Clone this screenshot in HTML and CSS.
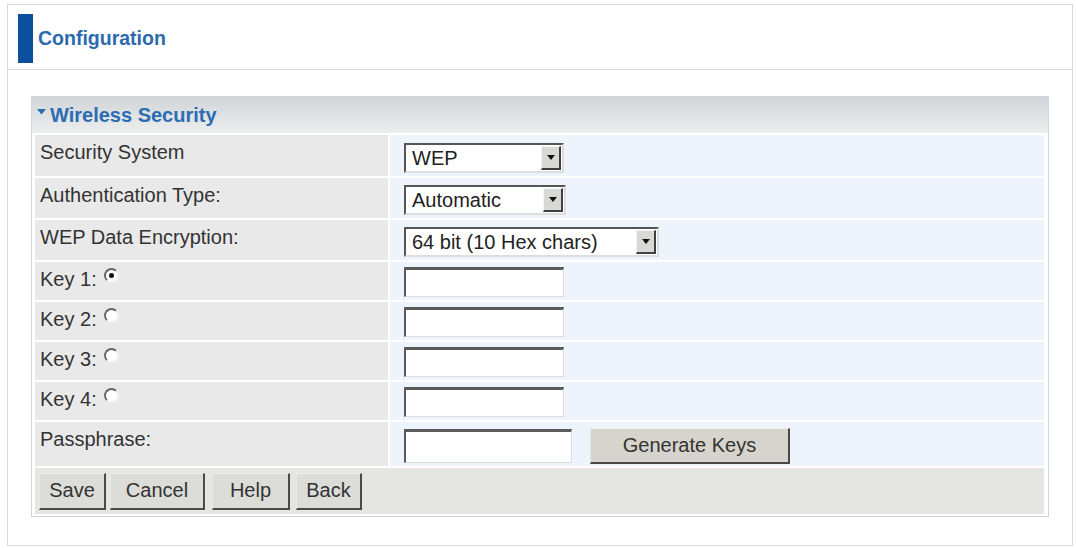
FILE: index.html
```html
<!DOCTYPE html>
<html lang="en">
<head>
    <meta charset="UTF-8">
    <title>Configuration - Wireless Security</title>
    <link rel="stylesheet" href="styles.css">
</head>
<body>

<div class="frame">
    <div class="page-head">
        <span class="head-mark"></span>
        <h1 class="page-title">Configuration</h1>
    </div>

    <div class="page-body">
        <div class="panel">
            <div class="panel-title">
                <svg class="caret" width="9" height="6" viewBox="0 0 9 6"><path d="M0 0 H9 L4.5 5.5 Z" fill="#2b6cb3"/></svg>
                Wireless Security
            </div>

            <div class="form-grid">
                <div class="label">Security System</div>
                <div class="value">
                    <span class="select-box sel-wep">
                        <select><option>WEP</option></select>
                        <span class="select-arrow"></span>
                    </span>
                </div>

                <div class="label">Authentication Type:</div>
                <div class="value">
                    <span class="select-box sel-auth">
                        <select><option>Automatic</option></select>
                        <span class="select-arrow"></span>
                    </span>
                </div>

                <div class="label">WEP Data Encryption:</div>
                <div class="value">
                    <span class="select-box sel-enc">
                        <select><option>64 bit (10 Hex chars)</option></select>
                        <span class="select-arrow"></span>
                    </span>
                </div>

                <div class="label">Key 1: <input type="radio" name="key" class="radio" checked></div>
                <div class="value"><input type="text" class="text-input"></div>

                <div class="label">Key 2: <input type="radio" name="key" class="radio"></div>
                <div class="value"><input type="text" class="text-input"></div>

                <div class="label">Key 3: <input type="radio" name="key" class="radio"></div>
                <div class="value"><input type="text" class="text-input"></div>

                <div class="label">Key 4: <input type="radio" name="key" class="radio"></div>
                <div class="value"><input type="text" class="text-input"></div>

                <div class="label">Passphrase:</div>
                <div class="value">
                    <input type="text" class="text-input pass-input">
                    <button class="btn btn-generate">Generate Keys</button>
                </div>
            </div>

            <div class="actions">
                <button class="btn btn-save">Save</button>
                <button class="btn btn-cancel">Cancel</button>
                <button class="btn btn-help">Help</button>
                <button class="btn btn-back">Back</button>
            </div>
        </div>
    </div>
</div>

</body>
</html>
```

FILE: styles.css
```css
body {
    margin: 0;
    padding: 0;
    background-color: #fff;
    font-family: "Liberation Sans", Arial, sans-serif;
    color: #333;
}

.frame {
    margin: 4px 0 0 7px;
    width: 1064px;
    height: 540px;
    border: 1px solid #d9d9d9;
}

/* top heading with the blue marker */
.page-head {
    display: flex;
    align-items: center;
    gap: 5px;
    padding: 9px 0 6px 10px;
    border-bottom: 1px solid #d8d8d8;
}

.head-mark {
    width: 15px;
    height: 49px;
    background-color: #0c4f9f;
}

.page-title {
    margin: 0;
    font-size: 19.5px;
    font-weight: bold;
    color: #2d69ae;
}

.page-body {
    padding: 26px 23px 0 23px;
}

.panel {
    border: 1px solid #cdd5dd;
    padding: 0 4px 2px 3px;
}

.panel-title {
    display: flex;
    align-items: center;
    gap: 4px;
    height: 36px;
    margin: 0 -4px 0 -3px;
    padding-left: 5px;
    background: linear-gradient(#d2d5d8, #eceeef);
    font-size: 20px;
    font-weight: bold;
    color: #2b6cb3;
}

.caret {
    margin-top: -6px;
}

.form-grid {
    display: grid;
    grid-template-columns: 353px 1fr;
    grid-template-rows: 41px 40px 40px 38px 38px 38px 38px 44px;
    gap: 2px;
    padding-top: 2px;
}

.label {
    background-color: #e9e9e9;
    padding: 6px 0 0 5px;
    font-size: 20px;
    line-height: 22px;
    color: #333;
}

.value {
    display: flex;
    align-items: flex-end;
    padding: 0 0 3px 14px;
    background-color: #eef4fb;
}

/* windows classic style select */
.select-box {
    position: relative;
    display: inline-block;
    height: 30px;
}

.select-box select {
    appearance: none;
    -webkit-appearance: none;
    width: 100%;
    height: 100%;
    margin: 0;
    padding: 0 0 0 6px;
    border: 2px solid;
    border-color: #555 #ddd #ddd #555;
    border-radius: 0;
    background-color: #fff;
    font-family: "Liberation Sans", Arial, sans-serif;
    font-size: 20px;
    color: #222;
}

.sel-wep { width: 160px; }
.sel-auth { width: 162px; }
.sel-enc { width: 255px; }

.select-arrow {
    position: absolute;
    top: 3px;
    right: 3px;
    bottom: 3px;
    width: 20px;
    background-color: #d8d8d6;
    border: 1px solid;
    border-width: 1px 2px 2px 1px;
    border-color: #f4f4f4 #404040 #404040 #f4f4f4;
    box-sizing: border-box;
}

.select-arrow::after {
    content: "";
    position: absolute;
    top: 50%;
    left: 50%;
    margin: -3px 0 0 -4px;
    border-left: 4px solid transparent;
    border-right: 4px solid transparent;
    border-top: 5px solid #111;
}

.text-input {
    box-sizing: border-box;
    width: 160px;
    height: 30px;
    margin: 0;
    border: 1px solid #ddd;
    border-top: 3px solid #5a5a5a;
    border-left: 2px solid #5a5a5a;
    background-color: #fff;
}

.pass-input {
    width: 168px;
    height: 34px;
}

.radio {
    appearance: none;
    -webkit-appearance: none;
    position: relative;
    top: -5px;
    box-sizing: border-box;
    width: 15px;
    height: 15px;
    margin: 0 0 0 2px;
    border: 2px solid;
    border-color: #666 #f2f2f2 #f2f2f2 #666;
    border-radius: 50%;
    background-color: #fff;
    vertical-align: middle;
}

.radio:checked::after {
    content: "";
    position: absolute;
    top: 3px;
    left: 3px;
    width: 5px;
    height: 5px;
    border-radius: 50%;
    background-color: #111;
}

.btn {
    height: 37px;
    padding: 0;
    border: 1px solid;
    border-width: 1px 2px 2px 1px;
    border-color: #eee #4a4a4a #4a4a4a #e8e8e8;
    background-color: #dcdcd9;
    font-family: "Liberation Sans", Arial, sans-serif;
    font-size: 20px;
    color: #333;
}

.btn-save { width: 67px; }
.btn-cancel { width: 95px; margin-left: -1px; }
.btn-help { width: 78px; margin-left: 2px; }
.btn-back { width: 66px; margin-left: 1px; }

.btn-generate {
    width: 200px;
    height: 36px;
    margin: 0 0 -1px 18px;
    background-color: #d6d4cd;
}

.actions {
    display: flex;
    align-items: center;
    gap: 5px;
    height: 46px;
    margin-top: 2px;
    padding-left: 4px;
    background-color: #e5e5e2;
}
```
